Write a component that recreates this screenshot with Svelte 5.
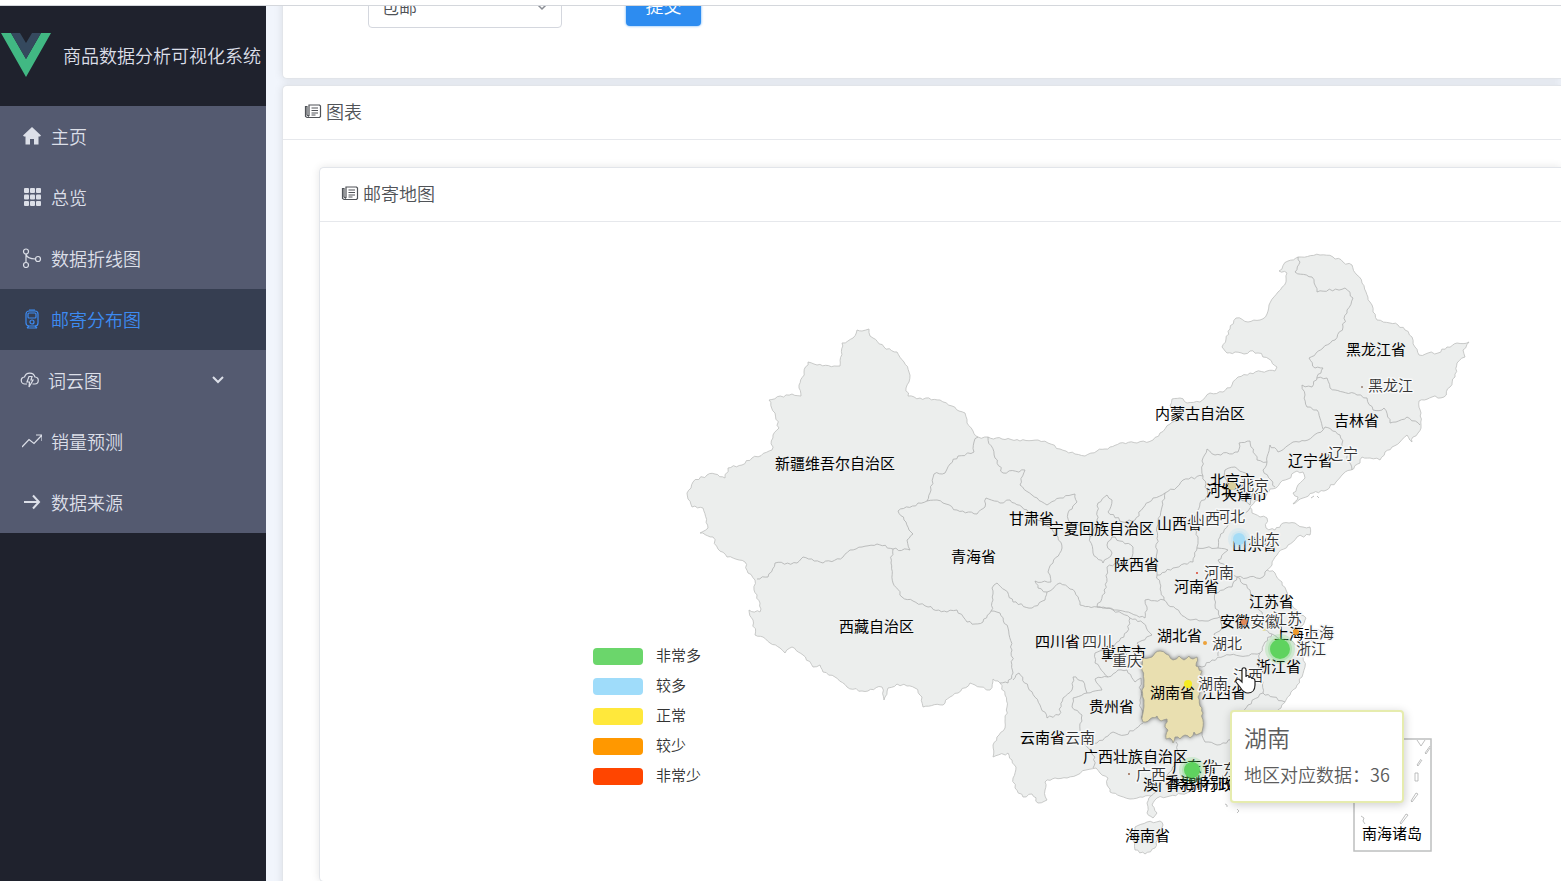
<script lang="ts">
  type Point = [number, number];
  type Label = { text: string; x: number; y: number };
  type Spot = Label & { cx: number; cy: number; r: number; color: string };

  const menu = [
    { label: "主页", icon: "home" },
    { label: "总览", icon: "grid" },
    { label: "数据折线图", icon: "share" },
    { label: "邮寄分布图", icon: "train", active: true },
    { label: "词云图", icon: "cloud", children: true },
    { label: "销量预测", icon: "trend" },
    { label: "数据来源", icon: "arrow" },
  ];

  const legend = [
    { label: "非常多", color: "#6bd66b" },
    { label: "较多", color: "#9fdcfa" },
    { label: "正常", color: "#ffe83b" },
    { label: "较少", color: "#ff9800" },
    { label: "非常少", color: "#ff4500" },
  ];

  const mainland =
    "857,330 862,331 869,329 870,336 873,338 884,347 897,352 904,362 909,372 909,382 906,388 908,396 920,398 940,400 952,406 959,411 965,413 967,423 973,431 978,437 988,437 1002,439 1020,441 1038,440 1048,443 1060,449 1075,454 1085,456 1097,451 1110,447 1120,443 1137,443 1153,440 1160,433 1170,424 1177,421 1180,413 1170,406 1172,399 1180,398 1187,403 1200,402 1210,393 1223,392 1232,385 1238,377 1250,373 1267,371 1275,371 1277,367 1269,359 1258,353 1250,351 1244,354 1235,352 1227,353 1222,347 1226,339 1230,329 1236,318 1248,322 1260,320 1267,314 1269,305 1278,292 1286,282 1287,273 1279,271 1288,261 1298,257 1320,255 1333,257 1343,262 1352,265 1357,275 1362,283 1366,292 1370,302 1373,312 1377,320 1390,323 1398,325 1405,330 1412,337 1415,347 1419,355 1428,353 1438,353 1447,347 1457,343 1469,342 1463,350 1465,357 1457,363 1455,377 1450,387 1444,397 1432,397 1419,401 1421,413 1421,425 1418,433 1413,437 1412,442 1407,435 1400,442 1392,447 1385,452 1380,460 1370,458 1362,457 1360,463 1351,470 1343,474 1336,482 1324,491 1313,493 1303,498 1293,504 1298,497 1293,493 1305,478 1303,472 1297,471 1288,479 1280,483 1276,488 1270,489 1265,498 1255,501 1250,507 1252,513 1260,517 1267,518 1266,528 1275,530 1283,523 1295,523 1303,527 1310,527 1310,535 1297,537 1288,545 1277,555 1272,565 1267,570 1275,573 1282,582 1286,590 1289,600 1297,610 1306,618 1303,625 1297,628 1301,633 1290,639 1295,645 1303,649 1303,657 1305,667 1302,677 1297,685 1291,692 1286,700 1281,708 1270,720 1262,735 1255,748 1240,765 1228,778 1215,784 1203,787 1187,793 1170,796 1157,798 1152,805 1157,813 1153,818 1147,813 1147,803 1151,796 1140,797 1130,799 1120,796 1110,792 1107,785 1108,778 1100,773 1096,768 1086,770 1077,775 1067,778 1055,778 1045,782 1045,790 1047,800 1038,803 1032,794 1023,797 1015,788 1013,778 1016,767 1012,760 1008,753 993,757 993,745 999,735 1005,728 1007,707 1005,695 1000,683 993,679 990,690 980,687 970,683 958,693 950,697 943,705 923,707 922,697 915,688 907,686 897,684 888,688 884,700 882,687 862,691 847,687 835,677 823,672 820,665 813,667 803,655 792,647 785,653 780,648 770,643 763,637 755,635 753,620 749,610 760,612 760,603 754,590 755,580 748,573 745,562 727,557 718,549 713,537 700,533 708,528 703,508 692,507 687,493 693,482 707,475 715,474 725,478 728,468 742,465 752,458 772,450 773,435 779,428 775,413 769,400 792,394 801,396 799,388 804,372 808,362 817,365 840,366 842,343 853,338";

  const hunan =
    "1143,658 1152,657 1155,653 1160,651 1166,654 1173,660 1179,656 1184,660 1189,656 1193,659 1197,657 1196,666 1202,671 1200,678 1203,684 1198,697 1200,706 1203,713 1202,732 1196,735 1194,732 1190,738 1185,735 1180,739 1175,737 1173,743 1170,738 1166,739 1168,730 1165,727 1167,719 1161,721 1157,716 1150,719 1143,722 1144,700 1142,690 1144,680 1142,670";

  const hainan =
    "1135,827 1147,822 1160,821 1163,825 1158,837 1155,848 1145,854 1135,850 1133,837";

  const borders = [
    "978,437 974,442 974,452 958,456 950,464 945,473 934,474 931,490 927,501 898,511 904,520 913,534 907,540 910,550 893,549",
    "893,549 877,544 862,547 850,550 843,557 823,563 803,557 797,563 775,563 768,577 757,579",
    "927,501 937,500 943,503 957,510 977,514 985,507 986,498 1000,503 1010,500 1022,507 1037,520 1050,527 1058,537 1062,548 1053,563 1048,572 1051,582 1035,581 1038,588 1047,592 1045,600 1032,608 1013,602 1005,590 997,583 992,588 993,600 991,611",
    "893,549 891,563 893,583 902,597 913,601 928,607 947,612 957,610 967,622 975,624 983,622 991,611 1000,613 1008,628 1012,650 1013,673 1008,683 1000,683",
    "1013,680 1019,673 1028,687 1040,705 1047,718 1059,715 1063,698 1072,690 1073,677 1083,681 1087,693 1102,690 1095,679 1108,677 1118,670",
    "1087,693 1073,698 1072,707 1082,715 1080,730 1083,743 1097,743 1113,732 1125,735 1143,723",
    "1118,670 1127,670 1135,682 1141,678 1140,700 1143,720",
    "1083,743 1087,747 1095,757 1093,768",
    "988,437 995,458 1003,473 1025,470 1020,485 1032,495 1047,505 1060,498 1075,494 1077,502 1068,513 1070,523 1085,525 1090,537 1093,553 1103,563 1112,553 1107,545 1112,537 1133,547 1132,557 1118,564 1107,567 1105,593 1097,607",
    "1090,537 1098,523 1098,503 1107,495 1112,500 1108,512 1123,522 1135,520 1143,508 1153,498 1165,493 1177,487 1183,480 1203,476",
    "1165,493 1162,507 1157,527 1157,553 1157,575 1173,568 1193,562 1197,547 1198,537 1193,523 1200,503 1208,495 1203,476",
    "1203,476 1202,461 1207,449 1215,455 1238,452 1239,443 1250,441 1257,460 1267,462 1263,470 1271,480 1275,487",
    "1267,462 1270,445 1278,452 1293,442 1308,440 1323,430 1325,427 1340,435 1345,453 1352,470",
    "1323,429 1317,410 1307,407 1305,395 1302,385 1312,387 1317,377 1323,368 1315,368 1309,358 1323,348 1335,340 1343,327 1347,310 1353,298 1345,288 1317,292 1312,277 1295,272 1300,262 1298,257",
    "1317,378 1327,378 1330,388 1343,392 1357,395 1367,398 1373,410 1382,410 1384,408 1390,423 1407,417 1420,425",
    "1250,508 1230,523 1220,537 1218,548 1197,548",
    "1218,548 1228,550 1218,560 1237,577 1247,578 1263,577 1267,570",
    "1225,470 1235,467 1248,475 1247,483 1238,490 1228,486 1225,478 1225,470",
    "1247,483 1253,492 1250,505 1240,498 1238,490",
    "1237,577 1232,587 1215,593 1215,605 1220,617 1205,621 1190,620 1180,613 1164,600 1157,575",
    "1164,600 1145,600 1147,607 1145,618 1117,610 1097,607 1080,605 1075,592 1060,583 1047,592",
    "1237,577 1250,590 1252,605 1262,612 1262,628 1272,634 1285,642 1291,640",
    "1220,617 1222,628 1214,634 1222,645 1218,656",
    "1197,668 1202,667 1212,660 1230,655 1240,656 1260,653 1265,642 1272,634",
    "1260,653 1258,668 1263,682 1263,693 1273,697 1285,702",
    "1263,693 1248,705 1240,720 1232,740 1217,745 1205,742 1202,732",
    "1176,742 1180,755 1172,770 1160,785 1151,796",
    "1097,607 1113,610 1130,618 1127,632 1113,647 1095,653 1095,663 1108,677",
    "1130,618 1143,623 1152,635 1137,643 1143,658",
  ];

  const provinces: Label[] = [
    { text: "黑龙江省", x: 1346, y: 349 },
    { text: "吉林省", x: 1334, y: 420 },
    { text: "内蒙古自治区", x: 1155, y: 413 },
    { text: "辽宁省", x: 1288, y: 460 },
    { text: "北京市", x: 1210, y: 480 },
    { text: "天津市", x: 1222, y: 494 },
    { text: "河北省", x: 1206, y: 490 },
    { text: "山西省", x: 1157, y: 523 },
    { text: "宁夏回族自治区", x: 1049, y: 528 },
    { text: "甘肃省", x: 1009, y: 518 },
    { text: "青海省", x: 951, y: 556 },
    { text: "新疆维吾尔自治区", x: 775, y: 463 },
    { text: "西藏自治区", x: 839, y: 626 },
    { text: "陕西省", x: 1114, y: 564 },
    { text: "河南省", x: 1174, y: 586 },
    { text: "山东省", x: 1232, y: 544 },
    { text: "江苏省", x: 1249, y: 601 },
    { text: "安徽省", x: 1220, y: 621 },
    { text: "上海市", x: 1274, y: 633 },
    { text: "浙江省", x: 1256, y: 666 },
    { text: "湖北省", x: 1157, y: 635 },
    { text: "四川省", x: 1035, y: 641 },
    { text: "重庆市", x: 1101, y: 652 },
    { text: "湖南省", x: 1150, y: 692 },
    { text: "江西省", x: 1201, y: 692 },
    { text: "贵州省", x: 1089, y: 706 },
    { text: "云南省", x: 1020, y: 737 },
    { text: "广西壮族自治区", x: 1083, y: 756 },
    { text: "广东省", x: 1172, y: 766 },
    { text: "香港特别行政区", x: 1165, y: 782 },
    { text: "澳门特别行政区", x: 1143, y: 784 },
    { text: "海南省", x: 1125, y: 835 },
    { text: "南海诸岛", x: 1362, y: 833 },
  ];

  const spots: Spot[] = [
    { text: "黑龙江", x: 1368, y: 385, cx: 1362, cy: 387, r: 1, color: "#9a7f70" },
    { text: "辽宁", x: 1328, y: 453, cx: 1322, cy: 454, r: 1, color: "#a86a50" },
    { text: "北京", x: 1239, y: 485, cx: 1232, cy: 486, r: 4, color: "#d9cf9c" },
    { text: "河北", x: 1215, y: 516, cx: 1209, cy: 516, r: 1, color: "#a86a50" },
    { text: "山西", x: 1190, y: 518, cx: 1184, cy: 518, r: 1, color: "#a86a50" },
    { text: "山东", x: 1250, y: 539, cx: 1239, cy: 539, r: 6, color: "#a5dcf6" },
    { text: "河南", x: 1204, y: 572, cx: 1197, cy: 573, r: 1, color: "#d9432f" },
    { text: "江苏", x: 1272, y: 618, cx: 1264, cy: 629, r: 2, color: "#e8dc96" },
    { text: "安徽", x: 1250, y: 621, cx: 1244, cy: 622, r: 3, color: "#e08a5a" },
    { text: "上海", x: 1304, y: 632, cx: 1296, cy: 632, r: 3, color: "#ee9a2c" },
    { text: "浙江", x: 1296, y: 648, cx: 1280, cy: 649, r: 10, color: "#5fd35f" },
    { text: "湖北", x: 1212, y: 643, cx: 1205, cy: 643, r: 2, color: "#eda23a" },
    { text: "四川", x: 1082, y: 641, cx: 1075, cy: 642, r: 1, color: "#d9432f" },
    { text: "重庆", x: 1112, y: 660, cx: 1106, cy: 661, r: 1, color: "#9a6a50" },
    { text: "湖南", x: 1198, y: 683, cx: 1188, cy: 684, r: 4, color: "#f6ec22" },
    { text: "江西", x: 1233, y: 675, cx: 1229, cy: 688, r: 1, color: "#9a6a50" },
    { text: "云南", x: 1065, y: 737, cx: 1058, cy: 737, r: 1, color: "#d9432f" },
    { text: "广西", x: 1136, y: 774, cx: 1129, cy: 774, r: 1, color: "#9a6a50" },
    { text: "广东", x: 1208, y: 769, cx: 1192, cy: 770, r: 8, color: "#5fd35f" },
  ];

  // breaks long straight runs so the borders look surveyed, not ruled
  function trace(source: string, closed = false) {
    const pts = source.split(" ").map((p) => p.split(",").map(Number) as Point);
    if (closed) pts.push(pts[0]);
    let d = `M${pts[0][0]} ${pts[0][1]}`;
    for (let i = 1; i < pts.length; i++) {
      const [ax, ay] = pts[i - 1];
      const [bx, by] = pts[i];
      const len = Math.hypot(bx - ax, by - ay);
      const steps = Math.max(1, Math.round(len / 3));
      for (let s = 1; s < steps; s++) {
        const t = s / steps;
        const n = Math.sin(ax * 12.9898 + ay * 78.233 + s * 37.719) * 43758.5453;
        const k = (n - Math.floor(n) - 0.5) * 2.6;
        const x = ax + (bx - ax) * t - ((by - ay) / len) * k;
        const y = ay + (by - ay) * t + ((bx - ax) / len) * k;
        d += `L${x.toFixed(1)} ${y.toFixed(1)}`;
      }
      d += `L${bx} ${by}`;
    }
    return closed ? d + "Z" : d;
  }

  let shipping = $state("包邮");
</script>

{#snippet newsIcon()}
  <svg class="news" viewBox="0 0 18 18" aria-hidden="true">
    <path d="M5 14V3h10.500l1 1v10.500l-1 1H3l-1.500-1V4.500H3V13l2 1.500M7.500 6h6.500M7.500 8.500h6.500M7.500 11h6.500M7.500 13h4" />
  </svg>
{/snippet}

<div class="layout">
  <div class="topline"></div>
  <div class="body">
    <aside class="sidebar">
      <div class="brand">
        <svg class="logo" viewBox="0 0 50 44" aria-hidden="true">
          <path fill="#41b883" d="M0 0h10l15 26L40 0h10L25 44z" />
          <path fill="#35495e" d="M10 0h9l6 10 6-10h9L25 26z" />
        </svg>
        <span>商品数据分析可视化系统</span>
      </div>
      <nav>
        {#each menu as item}
          <a href="#{item.icon}" class="menu-item" class:active={item.active} class:sub={item.children}>
            <svg class="menu-icon" viewBox="0 0 20 20" aria-hidden="true">
              {#if item.icon === "home"}
                <path class="solid" d="M10 1 19 9.500 18 10.500h-1.500V18.500h-4.500V13H8v5.500H3.500v-8H2L1 9.500z" />
              {:else if item.icon === "grid"}
                {#each [0, 1, 2] as row}
                  {#each [0, 1, 2] as col}
                    <rect class="solid" x={2 + col * 6} y={1 + row * 6.5} width="5" height="5" rx="1" />
                  {/each}
                {/each}
              {:else if item.icon === "share"}
                <circle cx="4" cy="3.500" r="2.500" />
                <circle cx="4" cy="17" r="2.500" />
                <circle cx="16" cy="11" r="2.500" />
                <path d="M4 6v8.500M4 6c1 4 4 5 9.500 5" />
              {:else if item.icon === "train"}
                <rect x="4" y="2" width="12" height="15" rx="3" />
                <rect x="6" y="4" width="8" height="5" rx="1" />
                <circle cx="10" cy="13" r="2" />
                <path d="M7 1h6M5 19h10M7 17l-2 2M13 17l2 2" />
              {:else if item.icon === "cloud"}
                <path d="M7 14H5a3.500 3.500 0 0 1-.5-7A5.500 5.500 0 0 1 15 7a3.500 3.500 0 0 1-.5 7H12.500M9 6.500h3L11 10h2l-4 7 .5-5H7z" />
              {:else if item.icon === "trend"}
                <path d="M0 16 7 8.500l5 4L20 4M14 4h6v6" />
              {:else}
                <path class="thick" d="M2 10h15M11 3.500 17 10l-6 6.500" />
              {/if}
            </svg>
            <span>{item.label}</span>
            {#if item.children}
              <svg class="caret" viewBox="0 0 12 12" aria-hidden="true"><path d="M1 3l5 5 5-5" /></svg>
            {/if}
          </a>
        {/each}
      </nav>
    </aside>

    <main>
      <form class="card filter" onsubmit={(e) => e.preventDefault()}>
        <div class="select-box">
          <select aria-label="包邮" bind:value={shipping}>
            <option>包邮</option>
          </select>
          <svg class="select-caret" viewBox="0 0 12 12" aria-hidden="true"><path d="M2 4l4 4 4-4" /></svg>
        </div>
        <button type="submit">提交</button>
      </form>

      <section class="card">
        <header>{@render newsIcon()}图表</header>
        <div class="card-body">
          <section class="card inner">
            <header>{@render newsIcon()}邮寄地图</header>
            <div class="chart">
              <svg class="map" viewBox="320 222 1241 659">
                <path class="land" d={trace(mainland, true)} />
                <path class="land" d={trace(hainan, true)} />
                {#each borders as border}
                  <path class="border" d={trace(border)} />
                {/each}
                <path class="land hover" d={trace(hunan, true)} />

                <rect class="inset" x="1354" y="739" width="77" height="112" />
                <path class="border" d="M1417 740l4 6 4-6M1430 746l-5 7 1 1 4-6M1421 759l-4 6 1 1 4-6M1415 773h3v8h-3zM1416 793l-5 8 1 1 6-8zM1406 814l-6 9 1 1 7-9zM1361 816l3 2-1 3 2 3M1225 804l2 1v2M1237 809l2 2-2 2M1311 498l3-2M1317 496l2 2" />

                {#each provinces as p}
                  <text class="province" x={p.x} y={p.y + 6}>{p.text}</text>
                {/each}

                {#each spots as s}
                  {#if s.r > 5}
                    <circle cx={s.cx} cy={s.cy} r={s.r + 5} fill={s.color} opacity="0.2" />
                    <circle cx={s.cx} cy={s.cy} r={s.r + 2} fill={s.color} opacity="0.25" />
                  {/if}
                  <circle cx={s.cx} cy={s.cy} r={s.r} fill={s.color} />
                {/each}
                {#each spots as s}
                  <text class="spot" x={s.x} y={s.y + 6}>{s.text}</text>
                {/each}

                {#each legend as item, i}
                  <rect x="593" y={648 + i * 30} width="50" height="17" rx="4" fill={item.color} />
                  <text class="legend" x="656" y={661 + i * 30}>{item.label}</text>
                {/each}

                <path
                  class="pointer"
                  d="M1242 670c0-3 4-3 4 0v7c0-2 3-2 3 0v1c0-2 3-1 3 1 0-1 3-1 3 2v4c0 5-3 8-7 8-5 0-6-3-8-6l-4-5c-1-2 2-4 4-2l2 2z"
                />
              </svg>
              <div class="tooltip" role="tooltip">
                <strong>湖南</strong>
                <span>地区对应数据：36</span>
              </div>
            </div>
          </section>
        </div>
      </section>
    </main>
  </div>
</div>

<style>
:global(body) {
  margin: 0;
  font-family: "Noto Sans CJK SC", "Noto Sans", sans-serif;
  font-size: 18px;
  font-weight: 350;
  background: #fff;
}
.layout {
  display: flex;
  flex-direction: column;
  height: 100vh;
  overflow: hidden;
}
.topline {
  flex: none;
  height: 5px;
  border-bottom: 1px solid #d4d7dc;
  background: #fff;
}
.body {
  display: flex;
  flex: 1;
  min-height: 0;
}

.sidebar {
  flex: none;
  width: 266px;
  background: #1f222d;
  color: #dcdfe8;
}
.brand {
  display: flex;
  align-items: center;
  gap: 12px;
  height: 98px;
  padding: 0 0 2px 1px;
  white-space: nowrap;
}
.logo {
  flex: none;
  width: 50px;
  height: 44px;
}
.menu-item {
  display: flex;
  align-items: center;
  gap: 9px;
  height: 59px;
  padding: 0 42px 2px 22px;
  background: #545a70;
  color: #dcdfe8;
  text-decoration: none;
}
.menu-item.active {
  background: #363e51;
  color: #3d8bf2;
}
.menu-item.sub {
  gap: 8px;
  padding-left: 20px;
}
.menu-icon {
  width: 20px;
  height: 20px;
  fill: none;
  stroke: currentColor;
  stroke-width: 1.2;
}
.menu-icon .solid {
  fill: currentColor;
  stroke: none;
}
.menu-icon .thick {
  stroke-width: 2;
}
.caret {
  width: 12px;
  height: 12px;
  margin-left: auto;
  fill: none;
  stroke: currentColor;
  stroke-width: 2;
}

main {
  flex: 1;
  min-width: 0;
  padding-left: 16px;
  overflow: hidden;
  background: #f1f5fc;
}
.card {
  border: 1px solid #e2e5ea;
  border-right: 0;
  border-radius: 5px 0 0 5px;
  background: #fff;
  box-shadow: 0 0 8px rgba(0, 0, 0, 0.1);
  color: #505358;
}
.card header {
  display: flex;
  align-items: center;
  gap: 4px;
  height: 49px;
  padding: 0 0 4px 21px;
  border-bottom: 1px solid #e6e8ec;
}
.card-body {
  padding: 27px 0 20px 36px;
}
.news {
  width: 18px;
  height: 18px;
  fill: none;
  stroke: currentColor;
  stroke-width: 1.2;
}

.filter {
  display: flex;
  align-items: flex-start;
  gap: 64px;
  margin: -20px 0 6px;
  padding: 0 0 50px 85px;
}
.select-box {
  position: relative;
  width: 194px;
}
select {
  display: block;
  box-sizing: border-box;
  width: 100%;
  height: 41px;
  padding: 0 12px 4px;
  border: 1px solid #d4d7de;
  border-radius: 4px;
  background: #fff;
  color: #505358;
  font: inherit;
  appearance: none;
}
.select-caret {
  position: absolute;
  top: 14px;
  right: 14px;
  width: 12px;
  height: 12px;
  fill: none;
  stroke: #8a8d94;
  stroke-width: 1.5;
  pointer-events: none;
}
button {
  height: 39px;
  width: 75px;
  padding: 0 0 4px;
  border: 0;
  border-radius: 4px;
  background: #2d8cf0;
  box-shadow: 0 0 2px 1px #b5d8fb;
  color: #fff;
  font: inherit;
  cursor: pointer;
}

.chart {
  position: relative;
}
.map {
  display: block;
  width: 100%;
}
.land {
  fill: #eceeed;
  stroke: #bcbebd;
  stroke-width: 0.8;
}
.hover {
  fill: #e9dfb0;
  stroke: #9b9a90;
  filter: drop-shadow(0 0 2px rgba(0, 0, 0, 0.5));
}
.border {
  fill: none;
  stroke: #adafae;
  stroke-width: 0.8;
}
.inset {
  fill: none;
  stroke: #bdbfbf;
  stroke-width: 1.5;
}
text {
  font-size: 15px;
}
.province {
  fill: #000;
  font-weight: 400;
}
.spot {
  fill: #333;
  stroke: #f7f8f8;
  stroke-width: 3;
  stroke-linejoin: round;
  paint-order: stroke;
}
.legend {
  fill: #333;
}
.pointer {
  fill: #fff;
  stroke: #222;
  stroke-width: 1.2;
}

.tooltip {
  position: absolute;
  top: 488px;
  left: 910px;
  display: flex;
  flex-direction: column;
  gap: 8px;
  padding: 10px 12px 14px;
  border: 2px solid #e6ecae;
  border-radius: 4px;
  background: #fff;
  box-shadow: 1px 2px 10px rgba(0, 0, 0, 0.2);
  color: #5c5c5c;
  line-height: 26px;
  white-space: nowrap;
}
.tooltip strong {
  font-size: 23px;
  font-weight: 350;
  line-height: 31px;
}
</style>
